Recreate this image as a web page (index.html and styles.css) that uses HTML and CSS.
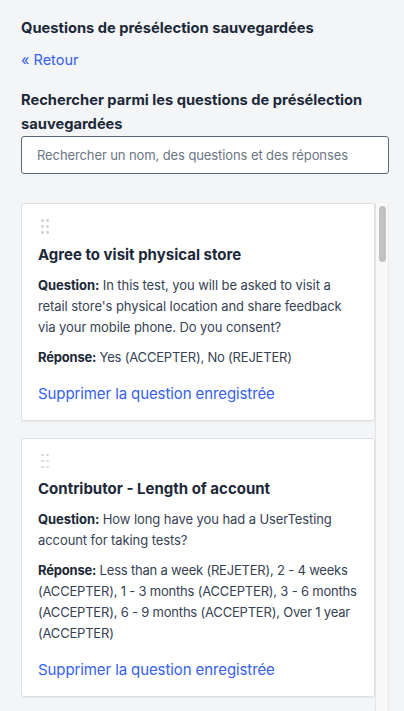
FILE: index.html
```html
<html>

<head>
	<meta charset="utf-8">
	<link rel="stylesheet" href="styles.css">
</head>

<body>
	<div class="panel">
		<h1 class="panel-title">Questions de présélection sauvegardées</h1>

		<a class="back-link" href="#">« Retour</a>

		<label class="search-label" for="search">Rechercher parmi les questions de présélection sauvegardées</label>
		<input class="search-input" id="search" type="text" placeholder="Rechercher un nom, des questions et des réponses">

		<div class="list-frame">
			<div class="saved-list">
				<div class="saved-card">
					<div class="drag-handle"><i></i><i></i><i></i><i></i><i></i><i></i></div>
					<h2 class="card-title">Agree to visit physical store</h2>
					<p class="card-text card-question"><b>Question:</b> In this test, you will be asked to visit a retail store's physical location and share feedback via your mobile phone. Do you consent?</p>
					<p class="card-text card-answer"><b>Réponse:</b> Yes (ACCEPTER), No (REJETER)</p>
					<a class="delete-link" href="#">Supprimer la question enregistrée</a>
				</div>

				<div class="saved-card">
					<div class="drag-handle"><i></i><i></i><i></i><i></i><i></i><i></i></div>
					<h2 class="card-title">Contributor - Length of account</h2>
					<p class="card-text card-question"><b>Question:</b> How long have you had a UserTesting account for taking tests?</p>
					<p class="card-text card-answer"><b>Réponse:</b> Less than a week (REJETER), 2 - 4 weeks (ACCEPTER), 1 - 3 months (ACCEPTER), 3 - 6 months (ACCEPTER), 6 - 9 months (ACCEPTER), Over 1 year (ACCEPTER)</p>
					<a class="delete-link" href="#">Supprimer la question enregistrée</a>
				</div>

				<div class="saved-card">
					<div class="drag-handle"><i></i><i></i><i></i><i></i><i></i><i></i></div>
					<h2 class="card-title">Device ownership</h2>
					<p class="card-text card-question"><b>Question:</b> Which of the following devices do you own?</p>
					<p class="card-text card-answer"><b>Réponse:</b> Smartphone (ACCEPTER), Tablet (ACCEPTER), None (REJETER)</p>
					<a class="delete-link" href="#">Supprimer la question enregistrée</a>
				</div>
			</div>

			<!-- always-visible scrollbar, drawn by hand -->
			<div class="scroll-track"><div class="scroll-thumb"></div></div>
		</div>
	</div>
</body>

</html>
```

FILE: styles.css
```css
:root {
	--ink: #1c2838;
	--ink-soft: #364253;
	--muted: #6b7684;
	--link: #3560f0;
	--page: #f3f5f7;
	--line: #dcdfe3;
}

body {
	margin: 0;
	background: var(--page);
	color: var(--ink);
	font-family: Inter, "Open Sans", sans-serif;
}

.panel {
	padding: 18px 15px 0 21px;
}

.panel-title {
	margin: 0;
	font-size: 14.7px;
	line-height: 20px;
	font-weight: 700;
}

.back-link {
	display: block;
	margin-top: 12px;
	font-size: 14.5px;
	line-height: 20px;
	color: var(--link);
	text-decoration: none;
}

.search-label {
	display: block;
	margin-top: 18px;
	font-size: 14.7px;
	line-height: 24px;
	font-weight: 700;
}

.search-input {
	display: block;
	box-sizing: border-box;
	width: 100%;
	height: 38px;
	margin: 0;
	padding: 0 15px;
	border: 1px solid #5d6878;
	border-radius: 3px;
	background: #fff;
	font-family: inherit;
	font-size: 13px;
	letter-spacing: -0.1px;
	color: var(--ink);
}

.search-input::placeholder {
	color: var(--muted);
}

/* list of saved cards + scrollbar */
.list-frame {
	display: flex;
	height: 530px;
	margin-top: 29px;
}

.saved-list {
	flex: 1;
	min-width: 0;
	overflow: hidden;
	display: flex;
	flex-direction: column;
	gap: 17px;
}

.scroll-track {
	flex: 0 0 14px;
	box-sizing: border-box;
	padding: 3px 2px 0 3px;
	background: #f8f8f8;
	border-left: 1px solid #e4e4e4;
	border-right: 1px solid #e8eaec;
}

.scroll-thumb {
	height: 56px;
	border-radius: 4px;
	background: #c1c1c1;
}

.saved-card {
	flex-shrink: 0;
	padding: 15px 13px 16px 16px;
	background: #fff;
	border: 1px solid var(--line);
	border-radius: 3px;
	box-shadow: 0 1px 2px rgba(0, 0, 0, 0.06);
}

.drag-handle {
	display: grid;
	grid-template-columns: repeat(2, 2px);
	gap: 3.5px 3px;
	margin-left: 3px;
	width: 7px;
}

.drag-handle i {
	width: 2.5px;
	height: 2.5px;
	border-radius: 50%;
	background: #d3d7dc;
}

.card-title {
	margin: 11px 0 0;
	font-size: 15px;
	line-height: 20px;
	font-weight: 700;
}

.card-text {
	margin: 10px 0 0;
	font-size: 13px;
	line-height: 21px;
	color: var(--ink-soft);
}

.card-text b {
	color: var(--ink);
}

.card-question {
	letter-spacing: -0.08px;
}

/* answers are mostly capitals, keep them a touch tighter */
.card-answer {
	margin-top: 9px;
	letter-spacing: -0.2px;
}

.delete-link {
	display: block;
	margin-top: 16px;
	font-size: 15px;
	line-height: 20px;
	letter-spacing: -0.1px;
	color: var(--link);
	text-decoration: none;
}
```
